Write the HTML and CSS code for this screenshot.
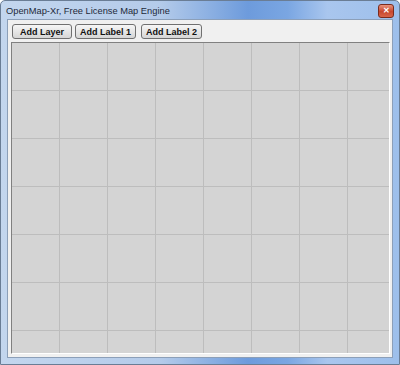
FILE: index.html
```html
<!DOCTYPE html>
<html lang="en">
<head>
  <meta charset="UTF-8">
  <title>OpenMap-Xr</title>
  <link rel="stylesheet" href="styles.css">
</head>
<body>
<div class="window">
  <div class="titlebar">
    <span class="title">OpenMap-Xr, Free License Map Engine</span>
    <span class="close">&#x2715;</span>
  </div>
  <div class="client">
    <div class="toolbar">
      <button class="btn layer">Add Layer</button>
      <button class="btn label1">Add Label 1</button>
      <button class="btn label2">Add Label 2</button>
    </div>
    <div class="map"></div>
  </div>
</div>
</body>
</html>
```

FILE: styles.css
```css
body {
  margin: 0;
  width: 400px;
  height: 365px;
  background: #fff;
  font-family: "Liberation Sans", Arial, sans-serif;
}
.window {
  box-sizing: border-box;
  height: 365px;
  display: flex;
  flex-direction: column;
  border: 1px solid #6a7d95;
  border-radius: 5px 5px 0 0;
  background: linear-gradient(90deg, #c3d6ee 0%, #b4cbea 40%, #6d9bdc 62%, #7aa6e2 72%, #a9c6ee 82%, #9dbfeb 100%);
  padding: 0 6px 6px;
}
.titlebar {
  height: 18px;
  display: flex;
  align-items: center;
  justify-content: space-between;
  margin: 0 -1px 0 -1px;
}
.title {
  font-family: "Liberation Sans", Arial, sans-serif;
  font-size: 9.3px;
  color: #1e2a3a;
  margin-top: 1px;
}
.close {
  width: 14px;
  height: 12px;
  margin-top: 2px;
  border: 1px solid #7a2b1d;
  border-radius: 3px;
  background: linear-gradient(#e8937c, #c8472e 55%, #d8654a);
  color: #fff;
  font-size: 8px;
  line-height: 12px;
  text-align: center;
  font-weight: bold;
}
.client {
  flex: 1;
  display: flex;
  flex-direction: column;
  gap: 3px;
  background: #f0f0f0;
  border: 1px solid #8c9fb8;
  padding: 4px 2px 3px 3px;
}
.toolbar {
  display: flex;
  padding-left: 1px;
}
.btn {
  box-sizing: border-box;
  height: 15px;
  padding: 0;
  border: 1px solid #707070;
  border-radius: 3px;
  background: linear-gradient(#f6f6f6, #e6e6e6 50%, #d6d6d6);
  font-family: "Liberation Sans", Arial, sans-serif;
  font-size: 9px;
  font-weight: bold;
  color: #111;
  line-height: 12px;
  text-align: center;
}
.layer {
  width: 60px;
}
.label1 {
  width: 61px;
  margin-left: 3px;
}
.label2 {
  width: 61px;
  margin-left: 5px;
}
.map {
  flex: 1;
  border: 1px solid #fff;
  border-top-color: #808080;
  border-left-color: #808080;
  background-color: #d4d4d4;
  background-image:
    linear-gradient(90deg, transparent 47px, #bdbdbd 47px),
    linear-gradient(180deg, transparent 47px, #bdbdbd 47px);
  background-size: 48px 48px;
}
```
